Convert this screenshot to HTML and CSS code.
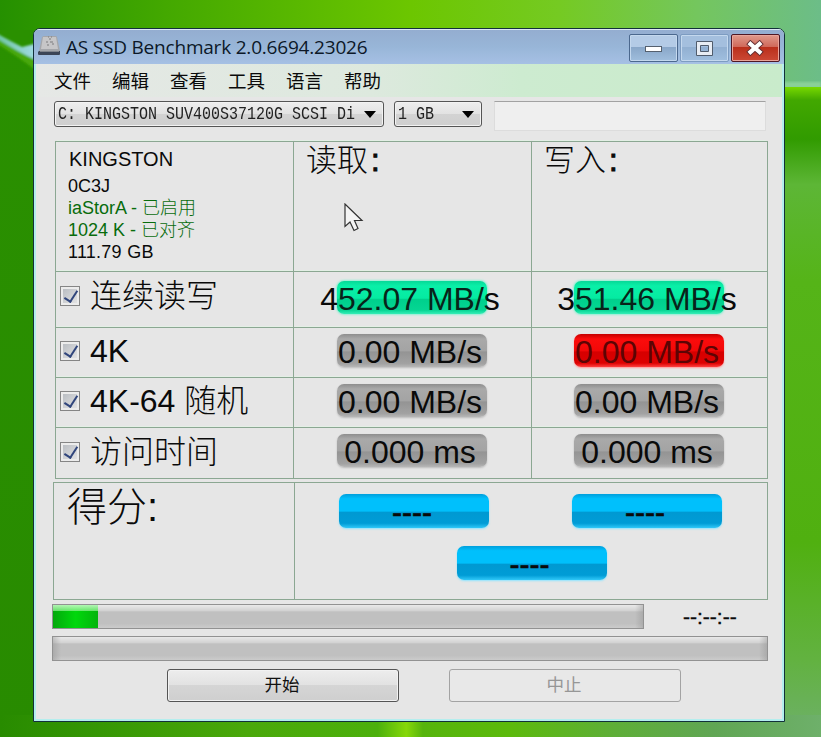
FILE: index.html
```html
<!DOCTYPE html>
<html lang="zh-CN">

<head>
    <meta charset="utf-8">
    <title>AS SSD Benchmark</title>
    <link rel="stylesheet" href="styles.css">
</head>

<body>

    <svg class="wallpaper" viewBox="0 0 821 737" preserveAspectRatio="none">
        <defs>
            <linearGradient id="top">
                <stop offset="0" stop-color="#259000" />
                <stop offset="0.2" stop-color="#43a800" />
                <stop offset="0.5" stop-color="#6cc600" />
                <stop offset="0.68" stop-color="#75ca22" />
                <stop offset="0.85" stop-color="#74c65e" />
                <stop offset="1" stop-color="#6cbd88" />
            </linearGradient>
            <linearGradient id="left" x2="0" y2="1">
                <stop offset="0" stop-color="#2a9000" />
                <stop offset="1" stop-color="#288b00" />
            </linearGradient>
            <linearGradient id="right" x2="0" y2="1">
                <stop offset="0" stop-color="#78d800" />
                <stop offset="0.02" stop-color="#42a800" />
                <stop offset="0.08" stop-color="#319b00" />
                <stop offset="0.15" stop-color="#5db636" />
                <stop offset="0.3" stop-color="#55b418" />
                <stop offset="0.7" stop-color="#50b010" />
                <stop offset="0.88" stop-color="#62b240" />
                <stop offset="1" stop-color="#6eb06a" />
            </linearGradient>
            <linearGradient id="bottom">
                <stop offset="0" stop-color="#288b00" />
                <stop offset="0.3" stop-color="#4aa80a" />
                <stop offset="0.46" stop-color="#4cb00c" />
                <stop offset="0.495" stop-color="#86d808" />
                <stop offset="0.515" stop-color="#56b40c" />
                <stop offset="0.62" stop-color="#5cba0c" />
                <stop offset="0.75" stop-color="#5eae38" />
                <stop offset="0.87" stop-color="#60a654" />
                <stop offset="1" stop-color="#6eb06a" />
            </linearGradient>
            <linearGradient id="stripe">
                <stop offset="0" stop-color="#6cc4a0" />
                <stop offset="1" stop-color="#a4dce8" />
            </linearGradient>
            <filter id="soft">
                <feGaussianBlur stdDeviation="1" />
            </filter>
        </defs>
        <rect width="821" height="90" fill="url(#top)" />
        <rect y="30" width="60" height="707" fill="url(#left)" />
        <g filter="url(#soft)">
            <path d="M-4 37Q14 48 38 58V72Q20 58 -4 43Z" fill="#48a808" />
            <path d="M-4 33Q12 42 22 47L38 43V61Q18 52 -4 38Z" fill="url(#stripe)" />
        </g>
        <rect x="770" y="82" width="51" height="6" fill="#8ad098" filter="url(#soft)" />
        <rect x="770" y="87" width="51" height="650" fill="url(#right)" />
        <rect y="715" width="821" height="22" fill="url(#bottom)" />
    </svg>

    <div class="window">
        <div class="titlebar">
            <svg class="app-icon" width="23" height="21" viewBox="0 0 23 21">
                <path d="M4 2Q5 1 7 1H17Q19 1 19 2L22 16H1Z" fill="#a4a6aa" />
                <path d="M5 2H18L20 14H3Z" fill="#c6c6c8" />
                <path d="M1 16H22V19Q22 20 21 20H1Q0 20 0 19V17Z" fill="#3c4556" />
                <path d="M2 16H21V17H2Z" fill="#80848c" />
                <path d="M10 2h1M13 2h1M11 4h2M8 7h2M12 7h3M9 10h2M14 9h2" stroke="#7a7a7c" />
            </svg>
            <span class="title">AS SSD Benchmark 2.0.6694.23026</span>
            <div class="controls">
                <div class="control">
                    <svg width="19" height="17" viewBox="0 0 19 17">
                        <rect x="1.500" y="6.500" width="16" height="5" fill="#fff" stroke="#55606e" />
                    </svg>
                </div>
                <div class="control dim">
                    <svg width="19" height="17" viewBox="0 0 19 17">
                        <path d="M1.500 1.500h16v14h-16zM5.500 5.500h8v6h-8z" fill="#e8edf4" fill-rule="evenodd" stroke="#505c6c" />
                    </svg>
                </div>
                <div class="control close">
                    <svg width="19" height="17" viewBox="0 0 19 17">
                        <path d="M4.500 4L13.500 12M13.500 4L4.500 12" stroke="#602c30" stroke-width="6" stroke-linecap="square" />
                        <path d="M4.500 4L13.500 12M13.500 4L4.500 12" stroke="#fff" stroke-width="4.200" stroke-linecap="square" />
                    </svg>
                </div>
            </div>
        </div>

        <div class="menu">
            <span>文件</span>
            <span>编辑</span>
            <span>查看</span>
            <span>工具</span>
            <span>语言</span>
            <span>帮助</span>
        </div>

        <div class="toolbar">
            <div class="select drive">
                <span>C: KINGSTON SUV400S37120G SCSI Di</span>
                <svg width="12" height="7" viewBox="0 0 12 7"><path d="M0 0H12L6 7Z" /></svg>
            </div>
            <div class="select size">
                <span>1 GB</span>
                <svg width="12" height="7" viewBox="0 0 12 7"><path d="M0 0H12L6 7Z" /></svg>
            </div>
            <div class="textbox"></div>
        </div>

        <div class="results">
            <div class="cell info">
                <div class="model">KINGSTON</div>
                <div>0C3J</div>
                <div class="ok">iaStorA - 已启用</div>
                <div class="ok">1024 K - 已对齐</div>
                <div class="capacity">111.79 GB</div>
            </div>
            <div class="cell head">读取<b>:</b></div>
            <div class="cell head">写入<b>:</b></div>

            <div class="cell test seq"><i class="check"></i>连续读写</div>
            <div class="cell seq"><div class="value green">452.07 MB/s</div></div>
            <div class="cell seq"><div class="value green">351.46 MB/s</div></div>

            <div class="cell test"><i class="check"></i>4K</div>
            <div class="cell"><div class="value">0.00 MB/s</div></div>
            <div class="cell"><div class="value red">0.00 MB/s</div></div>

            <div class="cell test"><i class="check"></i>4K-64 随机</div>
            <div class="cell"><div class="value">0.00 MB/s</div></div>
            <div class="cell"><div class="value">0.00 MB/s</div></div>

            <div class="cell test"><i class="check"></i>访问时间</div>
            <div class="cell"><div class="value">0.000 ms</div></div>
            <div class="cell"><div class="value">0.000 ms</div></div>
        </div>

        <div class="score">
            <div class="score-label">得分:</div>
            <div class="score-values">
                <div class="score-row">
                    <div class="value blue">----</div>
                    <div class="value blue">----</div>
                </div>
                <div class="value blue">----</div>
            </div>
        </div>

        <div class="progress-row">
            <div class="progress"><div class="bar" style="width: 45px"></div></div>
            <span class="time">--:--:--</span>
        </div>
        <div class="progress total"></div>

        <div class="buttons">
            <button>开始</button>
            <button disabled>中止</button>
        </div>

        <svg class="cursor" width="20" height="29" viewBox="0 0 20 29">
            <path d="M1 1V23.500L6 19L10 27.500L14 25.500L10.500 17.500H18Z" fill="#f4f4f4" stroke="#333" stroke-width="1.200" />
        </svg>
    </div>

</body>

</html>
```
FILE: styles.css
```css
* {
    box-sizing: border-box;
}

body {
    margin: 0;
    height: 737px;
    padding: 28px 0 0 33px;
    overflow: hidden;
    background-color: #3c9c00;
    font-family: "Liberation Sans", "Noto Sans CJK SC", sans-serif;
    color: #0a0a0a;
}

.wallpaper {
    position: absolute;
    left: 0;
    top: 0;
    width: 821px;
    height: 737px;
    z-index: -1;
}

.window {
    position: relative;
    width: 752px;
    height: 694px;
    border: 1px solid #12303a;
    border-radius: 7px 7px 0 0;
    background-color: #e6e6e6;
    box-shadow: inset 0 0 0 2px #b4eeee;
    overflow: hidden;
}

.titlebar {
    display: flex;
    align-items: flex-start;
    height: 35px;
    padding: 4px 4px 0 4px;
    border-top: 1px solid #dce8f4;
    background: linear-gradient(#94add0, #98b6d8 50%, #a6c0e4);
}

.app-icon {
    margin-top: 1px;
}

.title {
    margin-left: 5px;
    font: 19px/26px "Open Sans", sans-serif;
    letter-spacing: -0.2px;
    white-space: nowrap;
    color: #0c1828;
}

.controls {
    display: flex;
    gap: 2px;
    margin-left: auto;
}

.control {
    display: flex;
    align-items: center;
    justify-content: center;
    width: 49px;
    height: 28px;
    border: 1px solid #4b688e;
    border-radius: 2px;
    box-shadow: inset 0 0 0 1px #c4d8ee;
    background: linear-gradient(#b4cbe6 45%, #88a6c8 45%, #a0bedd);
}

.dim {
    border-color: #7d9cc1;
    background: linear-gradient(#a4bfde 45%, #91afd1 45%, #a0bfdf);
}

.close {
    border-color: #4e1824;
    box-shadow: inset 0 0 0 1px #e9a59b;
    background: linear-gradient(#e09a8c, #d0695a 45%, #b92e1a 45%, #cc4936);
}

.menu {
    display: flex;
    gap: 21px;
    height: 33px;
    margin: 0 2px;
    padding: 1px 0 0 18px;
    background: linear-gradient(90deg, #e6e8e6, #dde9de 45%, #cdebd0 65%, #c9ebcb);
    font-size: 18.5px;
    line-height: 33px;
}

.toolbar {
    display: flex;
    padding: 4px 0 0 20px;
}

.select {
    display: flex;
    align-items: center;
    justify-content: space-between;
    height: 26px;
    padding: 1px 7px 0 3px;
    border: 1px solid #555;
    border-radius: 3px;
    box-shadow: inset 0 0 0 1px #f3f3f3;
    background: linear-gradient(#eee, #e2e2e2 50%, #d3d3d3 50%, #cfcfcf);
    font: 15px/20px "Liberation Mono", monospace;
    color: #222;
    white-space: pre;
}

.select span {
    transform: scaleY(1.2);
}

.drive {
    width: 330px;
}

.size {
    width: 88px;
    margin-left: 10px;
}

.textbox {
    width: 272px;
    height: 30px;
    margin-left: 12px;
    border: 1px solid #dcdcdc;
    border-top-color: #a2a2a2;
    background-color: #efefef;
}

.results {
    display: grid;
    grid-template-columns: 238px 238px 235px;
    grid-template-rows: 130px 56px 50px 50px 51px;
    width: 713px;
    margin: 10px 0 0 21px;
    border: solid #8ba792;
    border-width: 0 1px 1px;
}

.cell {
    padding-top: 6px;
    border-top: 1px solid #8ba792;
    border-right: 1px solid #8ba792;
    box-shadow: 0 -2px 0 -1px #e3efe5;
}

.cell:nth-child(3n) {
    border-right: 0;
}

.cell:nth-child(3n) .value {
    margin-left: 42px;
}

.info {
    padding: 6px 0 0 12px;
    font-size: 18px;
    line-height: 22px;
}

.model {
    padding-left: 1px;
    margin-bottom: 4px;
    font-size: 20px;
    line-height: 23px;
}

.ok {
    color: #086c0c;
    font-weight: 300;
}

.capacity {
    letter-spacing: 0.25px;
}

.head {
    padding: 0 0 0 12px;
    font-size: 31px;
    font-weight: 300;
    line-height: 38px;
}

.head b {
    margin-left: 3px;
    -webkit-text-stroke: 1px #0a0a0a;
}

.test {
    display: flex;
    align-items: center;
    padding: 0 0 3px 4px;
    font-size: 32px;
    font-weight: 300;
    line-height: 44px;
}

.seq {
    padding-top: 9px;
}

.test.seq {
    padding-top: 0;
    padding-bottom: 8px;
}

.check {
    position: relative;
    width: 20px;
    height: 20px;
    margin-right: 10px;
    border: 1px solid #858585;
    box-shadow: inset 0 0 0 2px #ececec;
    background: linear-gradient(135deg, #b4b8be, #e8e8e8);
}

.check::after {
    content: "";
    position: absolute;
    left: 6px;
    top: 1px;
    width: 6px;
    height: 12px;
    border: solid #30457c;
    border-width: 0 2.5px 2.5px 0;
    transform: rotate(33deg);
}

.value {
    position: relative;
    display: flex;
    align-items: center;
    justify-content: center;
    width: 150px;
    height: 33px;
    margin-left: 43px;
    padding: 3px 4px 0 0;
    border-radius: 7px;
    background: linear-gradient(#8e8e8e, #a9a9a9 15%, #a4a4a4 50%, #949494 55%, #a2a2a2 90%, #b8b8b8);
    box-shadow: 0 1px 2px #bbb;
    font-size: 32px;
    white-space: nowrap;
}

.green {
    background: linear-gradient(#08d898, #0cf3ab 15%, #06eda4 52%, #00cf8c 56%, #06d493 88%, #3df0bc);
    box-shadow: 0 0 2px 1px #8ff0d4;
}

.green::after {
    content: "";
    position: absolute;
    inset: 0;
    border-radius: 7px;
    background-color: rgba(0, 220, 150, 0.12);
}

.red {
    background: linear-gradient(#c40000, #fb0c0c 15%, #f20808 50%, #d60000 55%, #dd0000 88%, #ff4040);
    box-shadow: 0 1px 2px #ff9a9a;
    color: #5c0404;
}

.blue {
    height: 34px;
    margin: 0;
    background: linear-gradient(#009fdc, #00c0fc 14%, #00c0fc 50%, #0099d2 54%, #009cd6 86%, #30c8f8);
    box-shadow: 0 1px 2px #8fe4ff;
    font-size: 30px;
    -webkit-text-stroke: 0.6px #0a0a0a;
}

.score {
    display: grid;
    grid-template-columns: 241px 1fr;
    width: 715px;
    height: 118px;
    margin: 3px 0 0 19px;
    border: 1px solid #8ba792;
}

.score-label {
    padding-left: 13px;
    border-right: 1px solid #8ba792;
    font-size: 40px;
    font-weight: 300;
    line-height: 48px;
}

.score-values {
    display: flex;
    flex-direction: column;
    align-items: center;
    gap: 18px;
    padding: 11px 0 0 1px;
}

.score-row {
    display: flex;
    gap: 83px;
    margin-right: 2px;
}

.progress-row {
    display: flex;
    align-items: center;
    margin: 4px 0 0 18px;
}

.progress {
    width: 592px;
    height: 25px;
    border: 1px solid #929292;
    background:
        linear-gradient(90deg, rgba(140, 140, 140, 0.4), transparent 8px, transparent calc(100% - 8px), rgba(140, 140, 140, 0.4)),
        linear-gradient(#e9e9e9, #d2d2d2 25%, #c0c0c0 30%, #c0c0c0 80%, #cbcbcb);
}

.bar {
    height: 23px;
    background:
        linear-gradient(rgba(210, 255, 210, 0.85), rgba(150, 245, 150, 0.7) 25%, transparent 28%),
        linear-gradient(90deg, #04a80c, #00d80c 50%, #04b40c);
}

.time {
    margin-left: 39px;
    font-size: 21px;
    line-height: 24px;
    -webkit-text-stroke: 0.4px #0a0a0a;
}

.total {
    width: 716px;
    margin: 7px 0 0 18px;
}

.buttons {
    display: flex;
    gap: 50px;
    margin: 8px 0 0 133px;
}

button {
    width: 232px;
    height: 33px;
    padding: 0 2px 4px 0;
    border: 1px solid #555;
    border-radius: 3px;
    box-shadow: inset 0 0 0 1px #f2f2f2;
    background: linear-gradient(#ededed, #e2e2e2 48%, #d5d5d5 50%, #cfcfcf);
    font: 17.5px "Noto Sans CJK SC", sans-serif;
    color: #111;
}

button:disabled {
    border-color: #a3a3a3;
    box-shadow: none;
    background: #e8e8e8;
    color: #969696;
}

.cursor {
    position: absolute;
    left: 310px;
    top: 174px;
}
```
